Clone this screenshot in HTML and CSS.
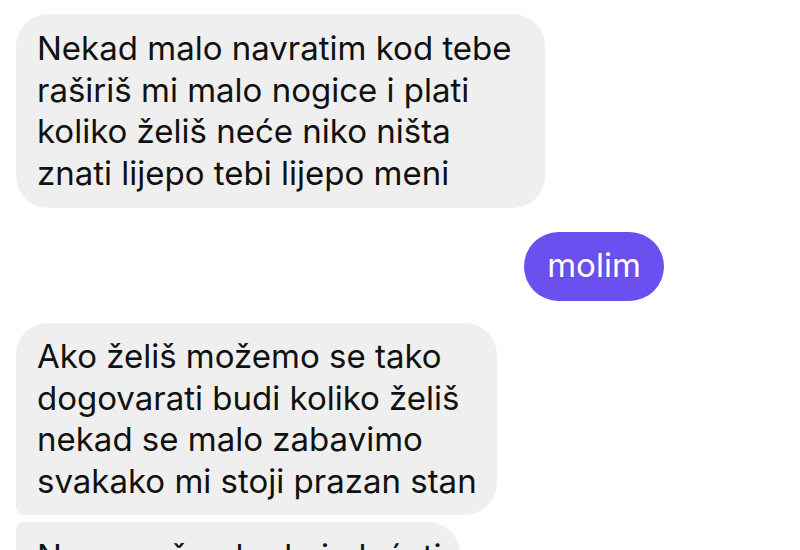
FILE: index.html
```html
<!DOCTYPE html>
<html lang="sr">
<head>
<meta charset="utf-8">
<link rel="stylesheet" href="styles.css">
</head>
<body>
<div class="chat">
  <div class="bubble in b1">Nekad malo navratim kod tebe<br>raširiš mi malo nogice i plati<br>koliko želiš neće niko ništa<br>znati lijepo tebi lijepo meni</div>
  <div class="bubble out b2">molim</div>
  <div class="bubble in first b3">Ako želiš možemo se tako<br>dogovarati budi koliko želiš<br>nekad se malo zabavimo<br>svakako mi stoji prazan stan</div>
  <div class="bubble in next b4">Ne moraš nekad ni plaćati</div>
</div>
</body>
</html>
```
FILE: styles.css
```css
html, body {
  margin: 0;
  padding: 0;
  background: #ffffff;
}
body {
  width: 800px;
  height: 550px;
  overflow: hidden;
  font-family: Inter, "Liberation Sans", sans-serif;
}
.chat {
  display: flex;
  flex-direction: column;
  padding: 14px 0 0 16px;
  width: 648px;
}
.bubble {
  box-sizing: border-box;
  font-size: 33px;
  line-height: 41.5px;
  color: #111111;
  border-radius: 32px;
  flex-shrink: 0;
  white-space: nowrap;
}
.in {
  align-self: flex-start;
  background: #efefef;
  padding: 14px 21px 14px 21px;
}
.out {
  align-self: flex-end;
  background: #6c50ef;
  color: #ffffff;
  border-radius: 35px;
  display: flex;
  align-items: center;
  justify-content: center;
}
.b1 { width: 529px; height: 194px; }
.b2 { width: 140px; height: 69px; margin-top: 24px; padding-bottom: 2px; }
.b3 { width: 481px; height: 192px; margin-top: 22px; padding-top: 13px; border-bottom-left-radius: 8px; }
.b4 { width: 444px; height: 80px; margin-top: 7px; border-top-left-radius: 8px; }
```
